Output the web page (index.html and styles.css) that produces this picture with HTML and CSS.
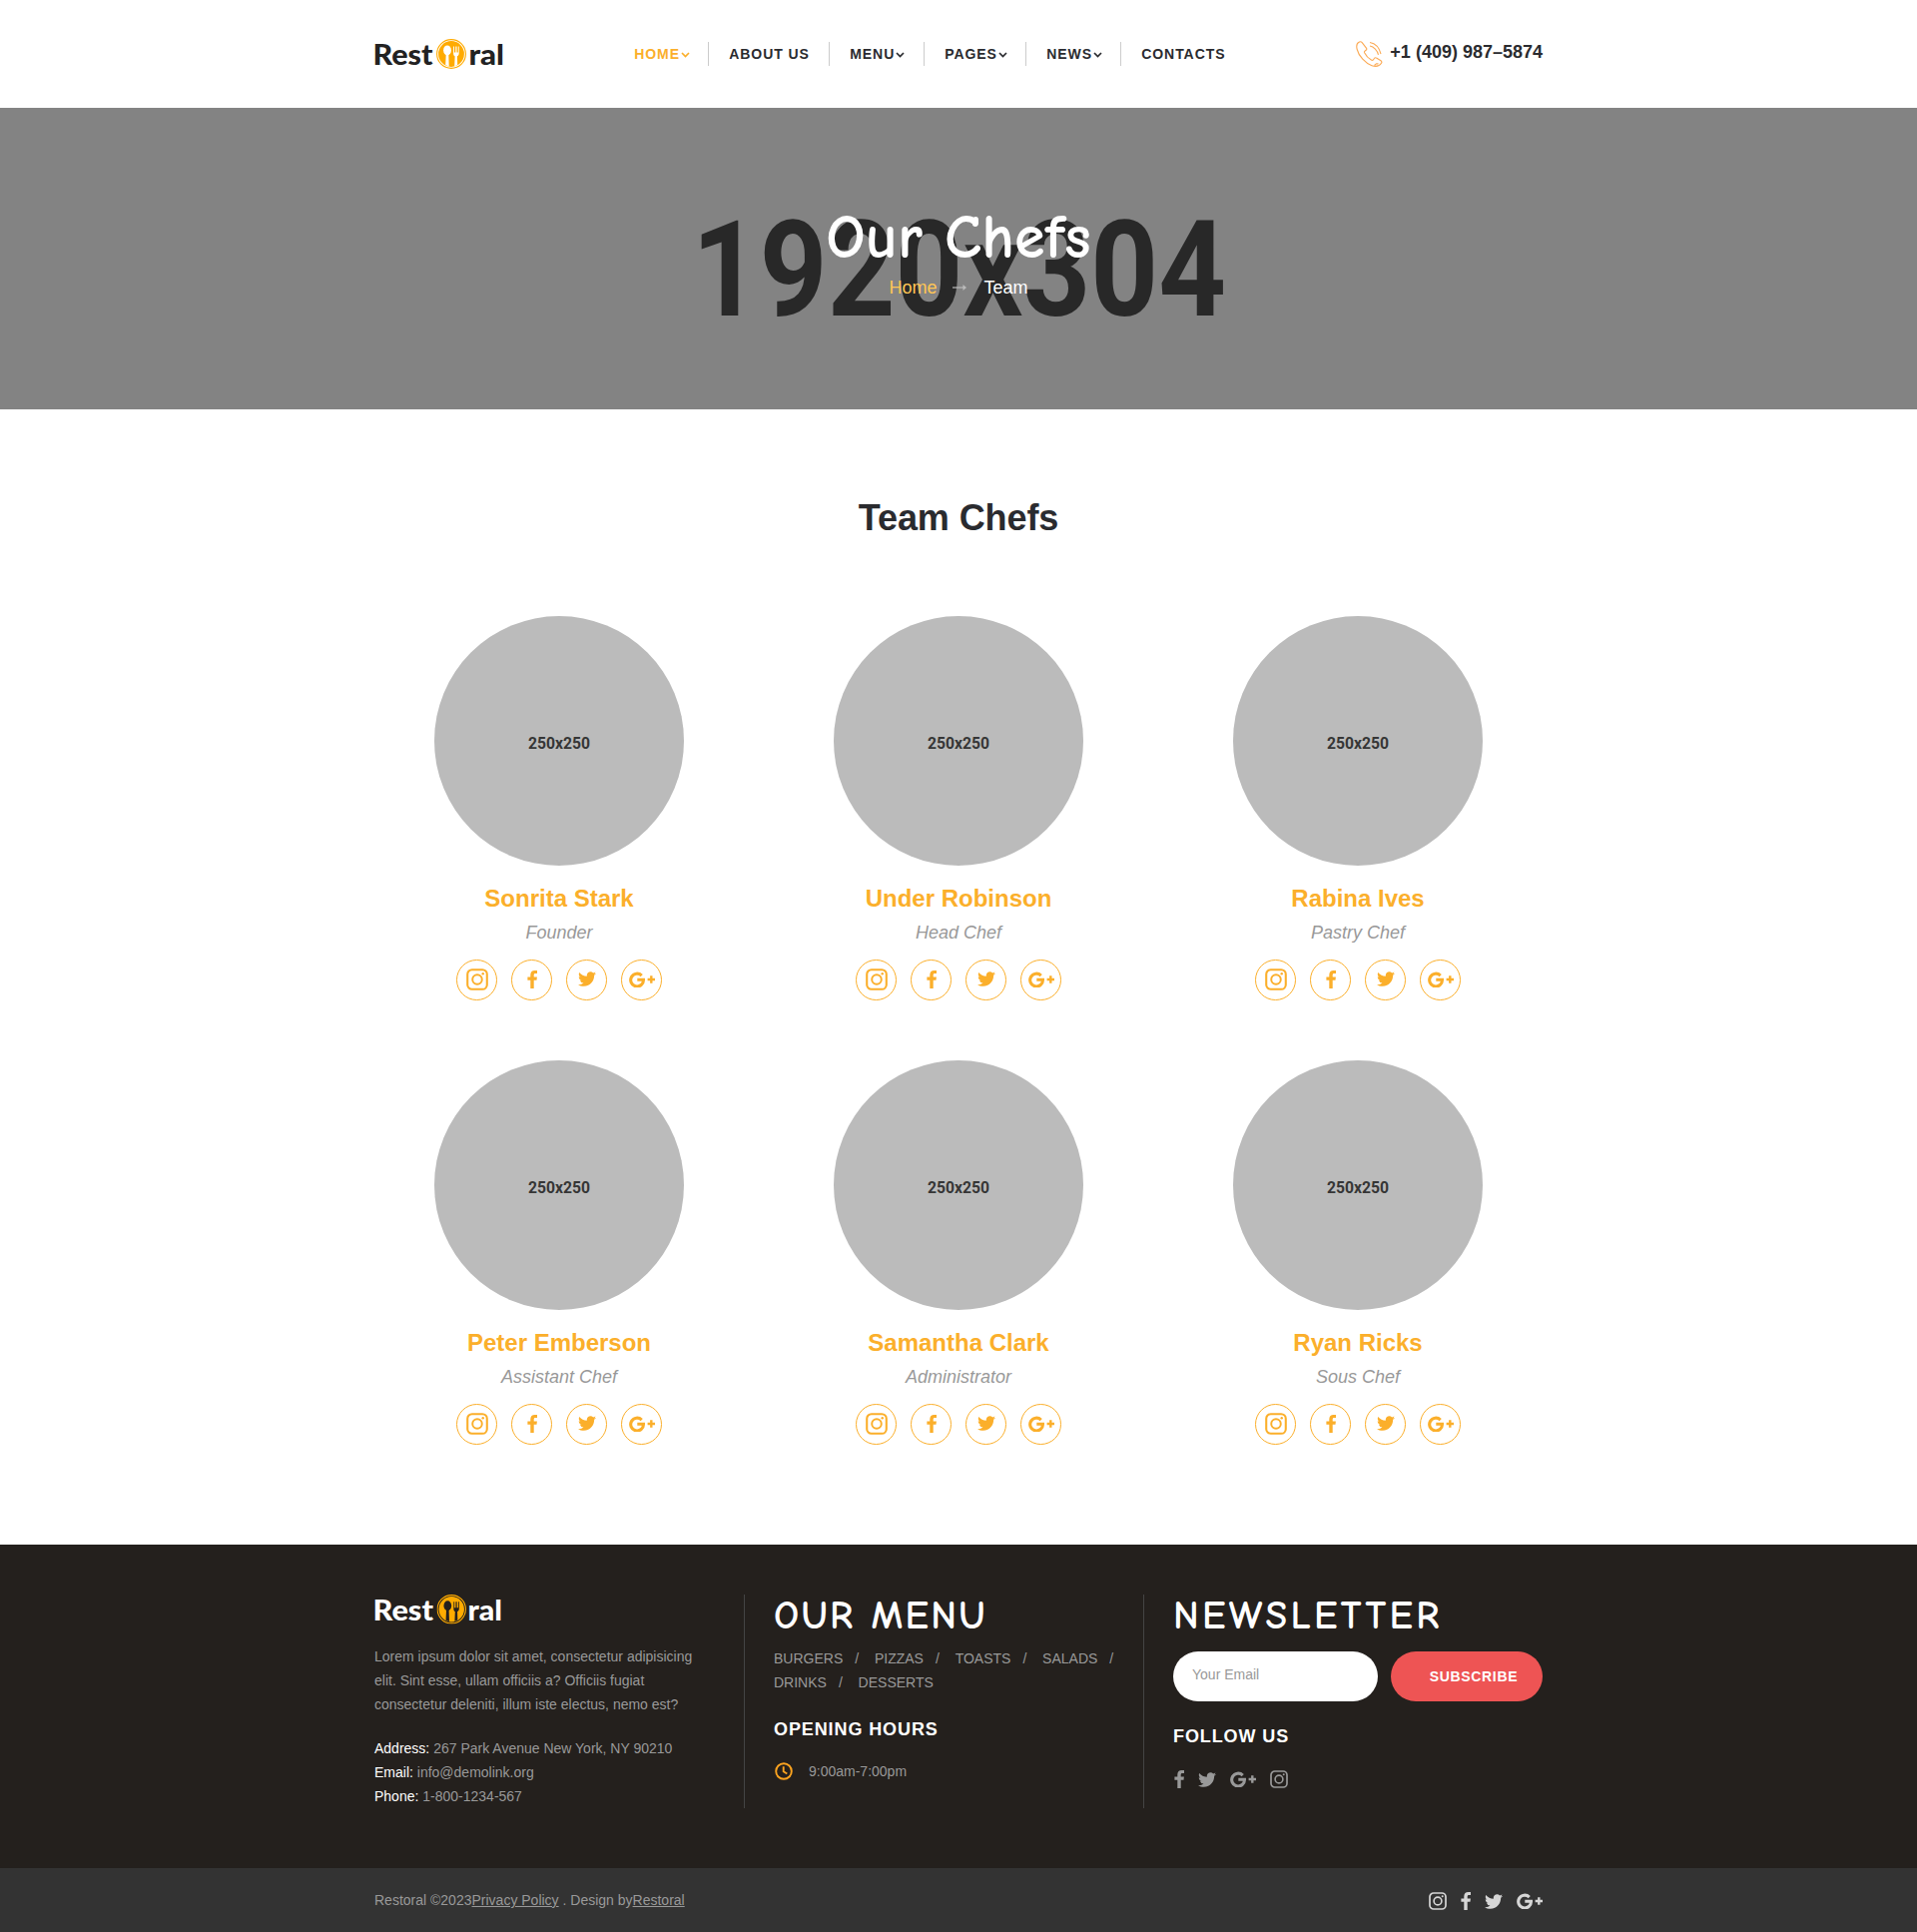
FILE: index.html
```html
<!DOCTYPE html>
<html lang="en">
<head>
<meta charset="utf-8">
<title>Our Chefs - Restoral</title>
<link rel="stylesheet" href="styles.css">
</head>
<body>
<svg class="sprite" aria-hidden="true">
  <symbol id="plate" viewBox="0 0 30 30">
    <circle cx="15" cy="15" r="14.4" fill="none" stroke="#ffab00" stroke-width="1.1"/>
    <circle cx="15" cy="15" r="12.9" fill="#ffab00"/>
    <ellipse cx="11" cy="11.4" rx="3.9" ry="5" fill="currentColor"/>
    <path d="M9.7 15h2.6l.4 12.4a13 13 0 0 1-3.5-1.3zM17.1 7.4h.9v6h1.3v-6h1.2v6h1.3v-6h.9v6.8c0 1.9-.8 2.7-1.8 3.1l.3 8.6a13 13 0 0 1-3 1.3l.4-9.9c-1-.4-1.5-1.2-1.5-3.1z" fill="currentColor"/>
  </symbol>
  <symbol id="insta" viewBox="0 0 18 18">
    <rect x="1" y="1" width="16" height="16" rx="3.8" fill="none" stroke="currentColor" stroke-width="1.7"/>
    <circle cx="9" cy="9" r="3.9" fill="none" stroke="currentColor" stroke-width="1.6"/>
    <circle cx="13.700" cy="4.300" r="1" fill="currentColor"/>
  </symbol>
  <symbol id="fb" viewBox="0 0 10 18"><path fill="currentColor" d="M10 .1v3H8.300C7 3.100 6.700 3.700 6.700 4.600v2H9.900l-.4 3.200H6.700V18H3.300V9.800H.4V6.600h2.900V4.200C3.300 1.500 5 0 7.500 0 8.700 0 9.700.1 10 .1z"/></symbol>
  <symbol id="tw" viewBox="1.500 4 21 17"><path fill="currentColor" d="M22.460 6c-.770.350-1.600.580-2.460.690.880-.530 1.560-1.370 1.880-2.380-.830.500-1.750.850-2.720 1.050C18.370 4.500 17.260 4 16 4c-2.350 0-4.270 1.920-4.270 4.290 0 .340.040.670.110.980C8.280 9.090 5.110 7.380 3 4.790c-.370.630-.580 1.370-.580 2.150 0 1.490.750 2.810 1.910 3.560-.710 0-1.370-.200-1.950-.500v.030c0 2.080 1.480 3.820 3.440 4.210a4.220 4.220 0 0 1-1.930.070 4.280 4.280 0 0 0 4 2.980 8.520 8.520 0 0 1-5.330 1.840c-.340 0-.680-.020-1.020-.060C3.440 20.290 5.700 21 8.120 21 16 21 20.330 14.460 20.330 8.790c0-.190 0-.370-.010-.560.840-.600 1.560-1.360 2.140-2.230z"/></symbol>
  <symbol id="gp" viewBox="0 0 26 16">
    <path d="M12.700 4.100A6.400 6.400 0 1 0 14.500 8.300H8.300" fill="none" stroke="currentColor" stroke-width="3.100"/>
    <path d="M18.600 8h7.400M22.300 4.300v7.400" fill="none" stroke="currentColor" stroke-width="2.400"/>
  </symbol>
  <symbol id="caret" viewBox="0 0 9 6"><path d="M1 1l3.500 3.500L8 1" fill="none" stroke="currentColor" stroke-width="1.700"/></symbol>
</svg>

<header class="header">
  <div class="container header-row">
    <svg class="logo logo-dark" width="130" height="32" role="img" aria-label="Restoral">
      <text class="logo-text" x="-1.500" y="26.500" textLength="60" lengthAdjust="spacingAndGlyphs">Rest</text>
      <use href="#plate" x="62" y="1" width="30" height="30"/>
      <text class="logo-text" x="94.500" y="26.500" textLength="35.500" lengthAdjust="spacingAndGlyphs">ral</text>
    </svg>
    <nav class="nav">
      <a class="nav-item active" href="#">HOME<svg class="caret"><use href="#caret"/></svg></a>
      <a class="nav-item" href="#">ABOUT US</a>
      <a class="nav-item" href="#">MENU<svg class="caret"><use href="#caret"/></svg></a>
      <a class="nav-item" href="#">PAGES<svg class="caret"><use href="#caret"/></svg></a>
      <a class="nav-item" href="#">NEWS<svg class="caret"><use href="#caret"/></svg></a>
      <a class="nav-item" href="#">CONTACTS</a>
    </nav>
    <div class="phone">
      <svg class="phone-icon" viewBox="0 0 27 26"><path d="M3.500 1C1 2 .300 5 1.200 8.500 2.800 15 9.500 22.500 16 24.700c3.500 1.200 7.500.700 9.500-2.500.700-1 .400-1.800-.500-2.500l-4.500-2.600c-.800-.500-1.600-.300-2.100.400l-1 1.300c-.500.600-1.300.700-2 .300-3-1.700-5.300-4.200-6.800-7.300-.300-.700-.100-1.400.500-1.800l1-.700c.700-.500.900-1.200.500-2L6.200 1.600C5.500.800 4.500.600 3.500 1zM18.500 24.500l2-1.800 2 .200M14 1.500c5.500 1 9.500 5.500 11 11.500M14 5c4 .700 7.500 4.500 8.500 8.800"/></svg>
      <a class="phone-link" href="#">+1 (409) 987–5874</a>
    </div>
  </div>
</header>

<section class="banner">
  <svg class="banner-size" viewBox="0 0 1920 302"><text x="693" y="208" textLength="535" lengthAdjust="spacingAndGlyphs">1920x304</text></svg>
  <div class="banner-content">
    <h1 class="banner-title">Our Chefs</h1>
    <div class="crumbs"><a class="crumb-link" href="#">Home</a><svg class="crumb-arrow" viewBox="0 0 14 6"><path d="M0 3h12" stroke="currentColor" stroke-width="1.200"/><path d="M10.500 0l3.500 3-3.500 3z" fill="currentColor"/></svg><span class="crumb-here">Team</span></div>
  </div>
</section>

<main class="team">
  <h2 class="team-title">Team Chefs</h2>
  <div class="container team-grid">
    <article class="member">
      <svg class="photo" viewBox="0 0 250 250"><text x="94" y="133" textLength="62" lengthAdjust="spacingAndGlyphs">250x250</text></svg>
      <h3 class="name">Sonrita Stark</h3><p class="role">Founder</p>
      <div class="socials"><a class="round"><svg class="i-insta big"><use href="#insta"/></svg></a><a class="round"><svg class="i-fb"><use href="#fb"/></svg></a><a class="round"><svg class="i-tw"><use href="#tw"/></svg></a><a class="round"><svg class="i-gp"><use href="#gp"/></svg></a></div>
    </article>
    <article class="member">
      <svg class="photo" viewBox="0 0 250 250"><text x="94" y="133" textLength="62" lengthAdjust="spacingAndGlyphs">250x250</text></svg>
      <h3 class="name">Under Robinson</h3><p class="role">Head Chef</p>
      <div class="socials"><a class="round"><svg class="i-insta big"><use href="#insta"/></svg></a><a class="round"><svg class="i-fb"><use href="#fb"/></svg></a><a class="round"><svg class="i-tw"><use href="#tw"/></svg></a><a class="round"><svg class="i-gp"><use href="#gp"/></svg></a></div>
    </article>
    <article class="member">
      <svg class="photo" viewBox="0 0 250 250"><text x="94" y="133" textLength="62" lengthAdjust="spacingAndGlyphs">250x250</text></svg>
      <h3 class="name">Rabina Ives</h3><p class="role">Pastry Chef</p>
      <div class="socials"><a class="round"><svg class="i-insta big"><use href="#insta"/></svg></a><a class="round"><svg class="i-fb"><use href="#fb"/></svg></a><a class="round"><svg class="i-tw"><use href="#tw"/></svg></a><a class="round"><svg class="i-gp"><use href="#gp"/></svg></a></div>
    </article>
    <article class="member">
      <svg class="photo" viewBox="0 0 250 250"><text x="94" y="133" textLength="62" lengthAdjust="spacingAndGlyphs">250x250</text></svg>
      <h3 class="name">Peter Emberson</h3><p class="role">Assistant Chef</p>
      <div class="socials"><a class="round"><svg class="i-insta big"><use href="#insta"/></svg></a><a class="round"><svg class="i-fb"><use href="#fb"/></svg></a><a class="round"><svg class="i-tw"><use href="#tw"/></svg></a><a class="round"><svg class="i-gp"><use href="#gp"/></svg></a></div>
    </article>
    <article class="member">
      <svg class="photo" viewBox="0 0 250 250"><text x="94" y="133" textLength="62" lengthAdjust="spacingAndGlyphs">250x250</text></svg>
      <h3 class="name">Samantha Clark</h3><p class="role">Administrator</p>
      <div class="socials"><a class="round"><svg class="i-insta big"><use href="#insta"/></svg></a><a class="round"><svg class="i-fb"><use href="#fb"/></svg></a><a class="round"><svg class="i-tw"><use href="#tw"/></svg></a><a class="round"><svg class="i-gp"><use href="#gp"/></svg></a></div>
    </article>
    <article class="member">
      <svg class="photo" viewBox="0 0 250 250"><text x="94" y="133" textLength="62" lengthAdjust="spacingAndGlyphs">250x250</text></svg>
      <h3 class="name">Ryan Ricks</h3><p class="role">Sous Chef</p>
      <div class="socials"><a class="round"><svg class="i-insta big"><use href="#insta"/></svg></a><a class="round"><svg class="i-fb"><use href="#fb"/></svg></a><a class="round"><svg class="i-tw"><use href="#tw"/></svg></a><a class="round"><svg class="i-gp"><use href="#gp"/></svg></a></div>
    </article>
  </div>
</main>

<footer class="footer">
  <div class="container footer-grid">
    <div class="footer-col about">
      <svg class="logo logo-light" width="130" height="32" role="img" aria-label="Restoral">
        <text class="logo-text" x="-1.500" y="26.500" textLength="60.500" lengthAdjust="spacingAndGlyphs">Rest</text>
        <use href="#plate" x="62.500" y="1" width="29.500" height="29.500"/>
        <text class="logo-text" x="93.500" y="26.500" textLength="34.500" lengthAdjust="spacingAndGlyphs">ral</text>
      </svg>
      <p class="about-text">Lorem ipsum dolor sit amet, consectetur adipisicing elit. Sint esse, ullam officiis a? Officiis fugiat consectetur deleniti, illum iste electus, nemo est?</p>
      <ul class="contacts">
        <li><span class="label">Address:</span> 267 Park Avenue New York, NY 90210</li>
        <li><span class="label">Email:</span> info@demolink.org</li>
        <li><span class="label">Phone:</span> 1-800-1234-567</li>
      </ul>
    </div>
    <div class="footer-col">
      <h4 class="hand">OUR MENU</h4>
      <ul class="dishes"><li>BURGERS</li><li>PIZZAS</li><li>TOASTS</li><li>SALADS</li><li>DRINKS</li><li>DESSERTS</li></ul>
      <h5 class="sub hours-title">OPENING HOURS</h5>
      <div class="hours"><svg class="clock" viewBox="0 0 18 18"><circle cx="9" cy="9" r="7.800"/><path d="M8.700 4.200v5l3.600 2.300"/></svg>9:00am-7:00pm</div>
    </div>
    <div class="footer-col">
      <h4 class="hand news">NEWSLETTER</h4>
      <form class="subscribe"><input class="email" type="email" placeholder="Your Email"><button class="btn" type="button">SUBSCRIBE</button></form>
      <h5 class="sub follow-title">FOLLOW US</h5>
      <div class="follow"><svg class="i-fb"><use href="#fb"/></svg><svg class="i-tw"><use href="#tw"/></svg><svg class="i-gp"><use href="#gp"/></svg><svg class="i-insta"><use href="#insta"/></svg></div>
    </div>
  </div>
</footer>
<div class="bottom">
  <div class="container bottom-row">
    <p class="rights">Restoral ©2023<a href="#">Privacy Policy</a> . Design by<a href="#">Restoral</a></p>
    <div class="bottom-social"><svg class="i-insta"><use href="#insta"/></svg><svg class="i-fb"><use href="#fb"/></svg><svg class="i-tw"><use href="#tw"/></svg><svg class="i-gp"><use href="#gp"/></svg></div>
  </div>
</div>
</body>
</html>
```
FILE: styles.css
```css
* { box-sizing: border-box; }
body { margin: 0; background: #fff; color: #2a2b2f; font: 14px/24px "Liberation Sans", Arial, sans-serif; }
h1, h2, h3, h4, h5, p, ul { margin: 0; padding: 0; }
ul { list-style: none; }
a { color: inherit; }
svg { display: block; flex: none; }
.sprite { width: 0; height: 0; position: absolute; }
.container { width: 1170px; margin: 0 auto; }

.logo { overflow: visible; }
.logo-text { font: 900 28.5px Lato, sans-serif; }
.logo-dark { color: #fff; fill: #222; }
.logo-light { color: #24201d; fill: #fff; }

.header { height: 108px; }
.header-row { display: flex; align-items: flex-start; height: 108px; }
.header-row .logo { margin-top: 38px; }
.nav { display: grid; grid-template-columns: 95px 121px 95px 102px 95px 105px; margin: 42px 0 0 109px; }
.nav-item { display: flex; align-items: center; height: 24px; padding-left: 20.2px; border-left: 1px solid #ccc; font-weight: 700; letter-spacing: .95px; text-decoration: none; white-space: nowrap; }
.nav-item:first-child { border-left-color: transparent; }
.active { color: #fbaf2b; }
.caret { width: 9px; height: 6px; margin: 1px 0 0 1px; }
.phone { display: flex; margin: 41px 0 0 auto; }
.phone-icon { width: 27px; height: 26px; margin-right: 7px; fill: none; stroke: #fbaa55; stroke-width: 1.1; }
.phone-link { font-size: 18px; font-weight: 700; line-height: 23px; text-decoration: none; white-space: nowrap; }

.banner { height: 302px; background: #838383; display: grid; }
.banner > * { grid-area: 1 / 1; }
.banner-size { width: 1920px; height: 302px; fill: #282828; font: 700 133.6px Roboto, sans-serif; }
.banner-content { display: flex; flex-direction: column; align-items: center; color: #fff; padding-top: 94px; }
.banner-title { font: 700 62px/72px "Comic Neue", "Comic Sans MS", cursive; white-space: nowrap; }
.crumbs { display: flex; align-items: center; font-size: 18px; line-height: 24px; margin-top: 1px; }
.crumb-link { color: #ffc655; text-decoration: none; padding-top: 1px; }
.crumb-arrow { width: 14px; height: 6px; margin: 1px 18px 0 15px; color: #bbb; }

.team { padding-top: 87px; height: 1137px; }
.team-title { font-size: 36px; line-height: 44px; text-align: center; letter-spacing: -.1px; margin-bottom: 76px; }
.team-grid { display: grid; grid-template-columns: repeat(3, 370px); column-gap: 30px; row-gap: 60px; }
.member { display: flex; flex-direction: column; align-items: center; height: 385px; }
.photo { width: 250px; height: 250px; border-radius: 50%; background: #bbb; fill: #363636; font: 700 17px Roboto, sans-serif; }
.name { font-size: 24px; line-height: 28px; margin-top: 19px; color: #fbaf2b; }
.role { font-size: 18px; font-style: italic; color: #999; margin: 8px 0 15px; }
.socials { display: flex; gap: 14px; color: #fbaf2b; }
.round { display: flex; align-items: center; justify-content: center; width: 41px; height: 41px; padding-bottom: 2px; border: 1px solid #fbaf2b; border-radius: 50%; }
.i-insta { width: 18px; height: 18px; }
.i-insta.big { width: 22px; height: 22px; }
.i-fb { width: 10px; height: 18px; }
.i-tw { width: 18px; height: 15px; }
.i-gp { width: 26px; height: 16px; }

.footer { background: #24201d; color: #999; height: 324px; padding-top: 50px; }
.footer-grid { display: grid; grid-template-columns: 370px 400px 400px; }
.footer-col { height: 214px; border-left: 1px solid #444; padding-left: 29px; }
.footer-col.about { border: 0; padding: 0; }
.about .logo { margin-top: -1px; }
.about-text { margin: 19px 0 20px; width: 340px; }
.label { color: #fff; }
.hand { font: 700 39.5px/42px "Comic Neue", "Comic Sans MS", cursive; color: #fff; letter-spacing: 2.2px; margin-bottom: 10px; white-space: nowrap; }
.dishes { display: flex; flex-wrap: wrap; width: 371px; }
.dishes li:not(:last-child)::after { content: "/"; margin: 0 15.8px 0 12px; }
.sub { color: #fff; font-size: 18px; letter-spacing: .9px; }
.hours-title { margin: 23px 0 18px; }
.hours { display: flex; align-items: center; gap: 16px; padding-left: 1px; }
.clock { width: 18px; height: 18px; fill: none; stroke: #fba31f; stroke-width: 1.9; }
.hand.news { letter-spacing: 3.3px; margin-bottom: 15px; }
.subscribe { display: flex; justify-content: space-between; width: 370px; }
.email { width: 205px; height: 50px; border: 0; border-radius: 25px; padding: 0 19px 4px; font: inherit; background: #fff; }
.email::placeholder { color: #999; }
.btn { width: 152px; height: 50px; border: 0; border-radius: 25px; background: #ee5454; color: #fff; font: 700 14px "Liberation Sans", Arial, sans-serif; letter-spacing: .65px; padding: 0 0 0 14px; }
.follow-title { margin: 23px 0 22px; }
.follow { display: flex; align-items: center; padding-left: 1px; gap: 14px; }

.bottom { background: #333; color: #999; height: 64px; }
.bottom-row { display: flex; align-items: center; justify-content: space-between; height: 64px; }
.bottom-social { display: flex; align-items: center; gap: 14px; color: #d6d6d6; padding-top: 2px; }
```
